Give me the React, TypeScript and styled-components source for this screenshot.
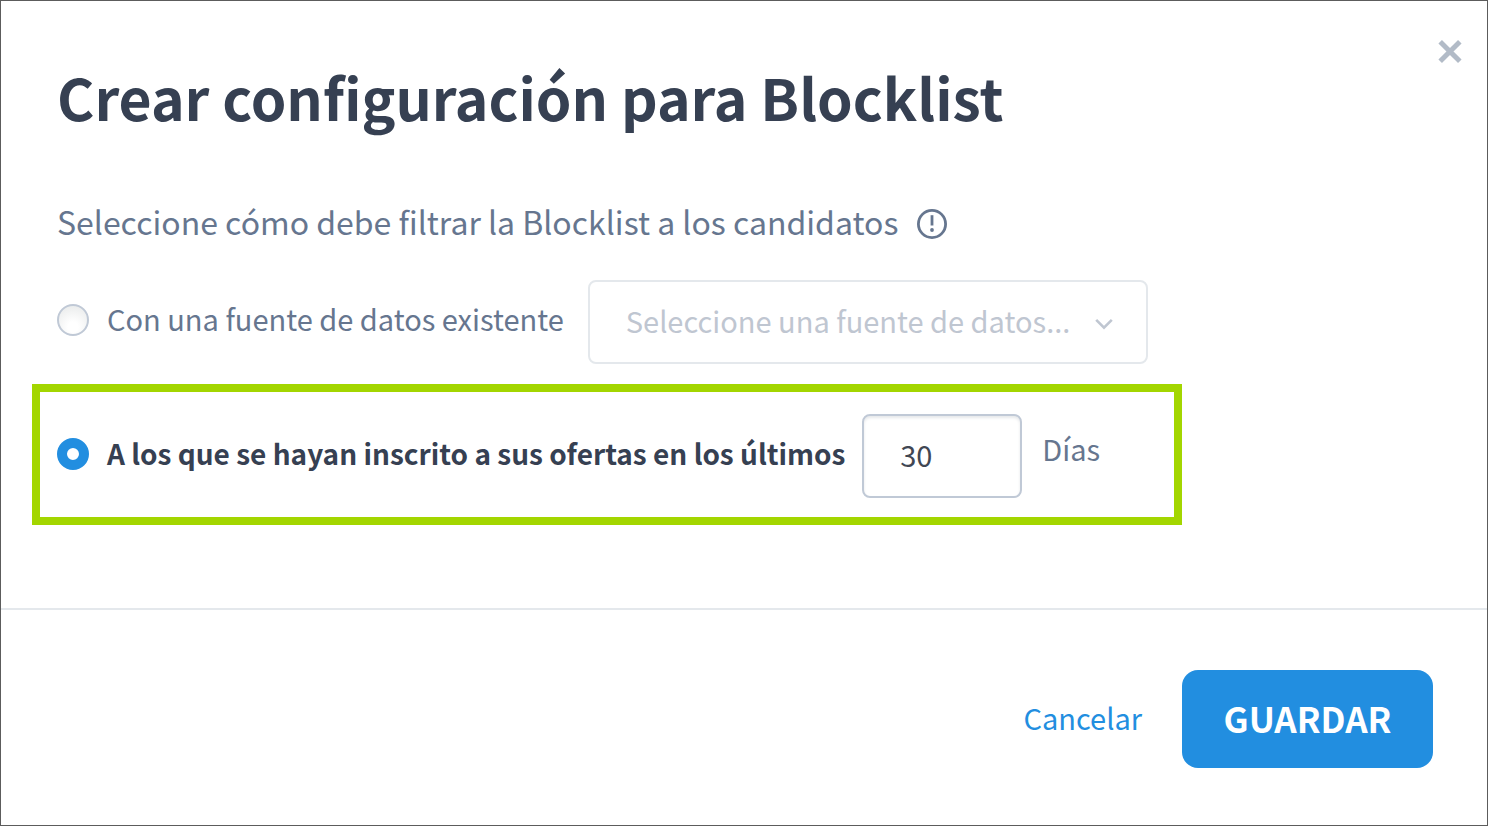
import React from 'react';
import styled, { createGlobalStyle } from 'styled-components';

const Global = createGlobalStyle`
  *, *::before, *::after { box-sizing: border-box; }
  body { margin: 0; background: #fff; font-family: "Noto Sans CJK JP", "Noto Sans", sans-serif; }
  button, input, select { font-family: inherit; }
`;

const Dialog = styled.form`
  position: relative;
  display: flex;
  flex-direction: column;
  min-height: 100vh;
  border: 1px solid #5c5c5c;
  background: #fff;
  color: #66768f;
`;

const Close = styled.button`
  position: absolute;
  top: 37px;
  right: 25px;
  padding: 0;
  border: 0;
  background: none;
  cursor: pointer;
  svg { display: block; }
`;

const Body = styled.div`
  flex: 1;
  display: flex;
  flex-direction: column;
  padding: 53px 31px 80px;
`;

const Title = styled.h1`
  margin: 0 25px;
  font-size: 57px;
  line-height: 84px;
  font-weight: 700;
  color: #364052;
`;

const Question = styled.p`
  display: flex;
  align-items: center;
  gap: 19px;
  margin: 59px 25px 35px;
  font-size: 32px;
  line-height: 48px;
  svg { margin-top: 6px; }
`;

const Options = styled.div`
  display: flex;
  flex-direction: column;
  gap: 20px;
  max-width: 1150px;
`;

const Option = styled.div<{ $highlighted?: boolean }>`
  display: flex;
  align-items: center;
  padding: ${(p) => (p.$highlighted ? '22px 17px 19px' : '0 25px')};
  border: ${(p) => (p.$highlighted ? '8px solid #a3d600' : '0')};
`;

const Radio = styled.input`
  appearance: none;
  width: 32px;
  height: 32px;
  margin: 0 18px 4px 0;
  border: 2px solid #c0c9d6;
  border-radius: 50%;
  background: radial-gradient(circle at 50% 75%, #fff 20%, #e6e8e8 100%);
  &:checked { border: 10px solid #228ee0; background: #fff; }
`;

const Label = styled.label<{ $strong?: boolean }>`
  padding-bottom: ${(p) => (p.$strong ? '6px' : '8px')};
  font-size: ${(p) => (p.$strong ? '28px' : '29px')};
  line-height: 42px;
  font-weight: ${(p) => (p.$strong ? 700 : 400)};
  color: ${(p) => (p.$strong ? '#364052' : 'inherit')};
`;

const Unit = styled(Label)`
  padding-bottom: 16px;
`;

const SelectBox = styled.div`
  position: relative;
  flex: 0 1 560px;
  margin-left: 24px;
  svg { position: absolute; right: 34px; top: 38px; pointer-events: none; }
`;

const Select = styled.select`
  appearance: none;
  display: block;
  width: 100%;
  height: 84px;
  padding: 0 36px 4px;
  border: 2px solid #e4e8ec;
  border-radius: 8px;
  background: #fff;
  color: #bfc6d1;
  font-size: 29px;
`;

const Days = styled.input`
  width: 160px;
  height: 84px;
  margin: 0 20px 0 17px;
  padding: 0 36px 4px;
  border: 2px solid #c0c9d6;
  border-radius: 8px;
  box-shadow: inset 0 2px 3px #e6e8ea;
  font-size: 29px;
  color: #414753;
`;

const Footer = styled.footer`
  display: flex;
  justify-content: flex-end;
  align-items: center;
  gap: 40px;
  padding: 60px 54px 57px;
  border-top: 2px solid #e4e8ec;
`;

const Cancel = styled.button`
  padding: 0 0 4px;
  border: 0;
  background: none;
  color: #228ee0;
  font-size: 29px;
  line-height: 42px;
  cursor: pointer;
`;

const Save = styled.button`
  min-width: 251px;
  height: 98px;
  padding: 0 40px 4px;
  border: 0;
  border-radius: 16px;
  background: #228ee0;
  color: #fff;
  font-size: 35px;
  font-weight: 700;
  cursor: pointer;
`;

export default function App() {
  return (
    <>
      <Global />
      <Dialog role="dialog" aria-labelledby="title" onSubmit={(e) => e.preventDefault()}>
        <Close type="button" aria-label="Cerrar">
          <svg width="24" height="26" viewBox="0 0 24 26" stroke="#b2bbc7" strokeWidth="5">
            <path d="M2.200 3.700 21.800 23.300M21.800 3.700 2.200 23.300" />
          </svg>
        </Close>
        <Body>
          <Title id="title">Crear configuración para Blocklist</Title>
          <Question>
            Seleccione cómo debe filtrar la Blocklist a los candidatos
            <svg width="30" height="30" viewBox="0 0 30 30" fill="none" stroke="#66768f" strokeWidth="2.8">
              <circle cx="15" cy="15" r="13.6" />
              <path d="M15 6.200v10.300" />
              <circle cx="15" cy="21" r="1.900" fill="#66768f" stroke="none" />
            </svg>
          </Question>
          <Options role="radiogroup">
            <Option>
              <Radio type="radio" name="filter" id="source" />
              <Label htmlFor="source">Con una fuente de datos existente</Label>
              <SelectBox>
                <Select aria-label="Fuente de datos">
                  <option>Seleccione una fuente de datos...</option>
                </Select>
                <svg width="20" height="12" viewBox="0 0 20 12" fill="none" stroke="#bfc6d1" strokeWidth="2.6">
                  <path d="M2.200 1.800l7.800 7.800 7.800-7.800" />
                </svg>
              </SelectBox>
            </Option>
            <Option $highlighted>
              <Radio type="radio" name="filter" id="recent" defaultChecked />
              <Label htmlFor="recent" $strong>A los que se hayan inscrito a sus ofertas en los últimos</Label>
              <Days id="days" defaultValue="30" />
              <Unit htmlFor="days">Días</Unit>
            </Option>
          </Options>
        </Body>
        <Footer>
          <Cancel type="button">Cancelar</Cancel>
          <Save type="submit">GUARDAR</Save>
        </Footer>
      </Dialog>
    </>
  );
}
